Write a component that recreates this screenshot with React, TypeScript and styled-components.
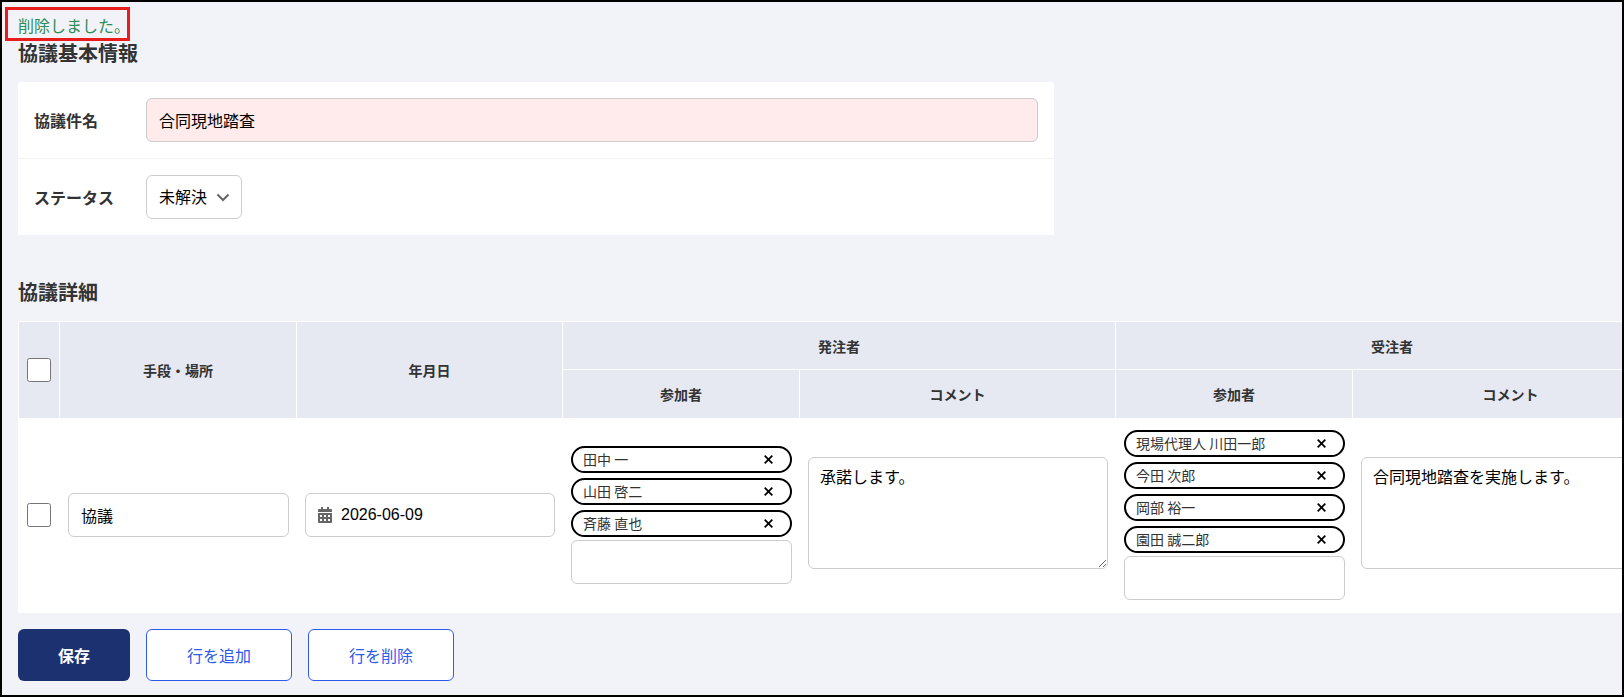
import React from "react";
import styled, { createGlobalStyle } from "styled-components";

const jp = `"Noto Sans CJK JP", sans-serif`;

const GlobalStyle = createGlobalStyle`
  *, *::before, *::after { box-sizing: border-box; }
  body {
    margin: 0;
    background: #f2f3f8;
    color: #333;
    font: 400 16px/24px ${jp};
  }
`;

const Page = styled.main`
  min-height: 100vh;
  padding: 11px 0 14px 16px;
  border: 2px solid #000;
  overflow: hidden;
`;

const Message = styled.p`
  position: relative;
  width: fit-content;
  margin: 0;
  color: #2e8b57;
`;

const Highlight = styled.span`
  position: absolute;
  inset: -6px 0 -4px -13px;
  border: 3px solid #e81c1c;
`;

const Heading = styled.h2`
  margin: 0 0 13px;
  font-size: 20px;
  line-height: 32px;
  font-weight: 700;
`;

const Panel = styled.div`
  max-width: 1036px;
  margin-bottom: 41px;
  background: #fff;
`;

const Field = styled.div`
  display: grid;
  grid-template-columns: 112px 1fr;
  align-items: center;
  padding: 16px;

  & + & { border-top: 1px solid #f2f3f8; }
`;

const FieldLabel = styled.label`
  font-weight: 700;
`;

const TextInput = styled.input<{ $required?: boolean }>`
  display: block;
  width: 100%;
  height: 44px;
  padding: 0 12px;
  border: 1px solid #ccc;
  border-radius: 6px;
  background: ${(p) => (p.$required ? "#ffebeb" : "#fff")};
  color: #000;
  font: 400 16px/24px ${jp};
`;

const SelectBox = styled.div`
  display: grid;
  width: 96px;
  align-items: center;

  & > * { grid-area: 1 / 1; }
  & > svg { justify-self: end; margin-right: 12px; pointer-events: none; }
`;

const Select = styled.select`
  width: 100%;
  height: 44px;
  padding: 0 12px 2px;
  appearance: none;
  border: 1px solid #ccc;
  border-radius: 6px;
  background: #fff;
  color: #000;
  font: 400 16px/24px ${jp};
`;

const TableArea = styled.div`
  overflow: hidden;
  margin-bottom: 16px;
`;

const Table = styled.table`
  width: 1650px;
  table-layout: fixed;
  border-collapse: separate;
  border-spacing: 0;
  background: #fff;
`;

const HeadRow = styled.tr<{ $height: number }>`
  height: ${(p) => p.$height}px;
`;

const HeadCell = styled.th`
  padding: 0 8px;
  border: solid #fff;
  border-width: 1px 0 0 1px;
  background: #e6e8f2;
  font-size: 14px;
  line-height: 20px;
  font-weight: 700;
`;

const Cell = styled.td`
  padding: 11px 7px 13px 8px;
  border: solid #fff;
  border-width: 1px 0 0 1px;
  vertical-align: middle;
`;

const Checkbox = styled.input`
  display: block;
  width: 24px;
  height: 24px;
  margin: 0;
`;

const DateBox = styled.label`
  display: flex;
  align-items: center;
  gap: 9px;
  height: 44px;
  padding: 0 12px;
  border: 1px solid #ccc;
  border-radius: 6px;
  color: #666;
`;

const DateInput = styled.input`
  flex: 1;
  min-width: 0;
  padding: 0;
  border: 0;
  background: none;
  color: #000;
  font: 400 16px/24px "Liberation Sans", Arial, sans-serif;
`;

const People = styled.div`
  display: flex;
  flex-direction: column;
  gap: 3px;
`;

const ChipList = styled.ul`
  display: flex;
  flex-direction: column;
  gap: 5px;
  margin: 0;
  padding: 0;
  list-style: none;
`;

const Chip = styled.li`
  display: flex;
  align-items: center;
  justify-content: space-between;
  height: 27px;
  padding: 0 17px 0 10px;
  border: 2px solid #000;
  border-radius: 14px;
  font-size: 14px;
  line-height: 20px;
`;

const ChipName = styled.span`
  padding-bottom: 2px;
`;

const RemoveButton = styled.button`
  display: flex;
  padding: 0;
  border: 0;
  background: none;
  color: #000;
`;

const Comment = styled.textarea`
  display: block;
  width: 100%;
  height: 112px;
  margin-bottom: 5px;
  padding: 6px 11px;
  border: 1px solid #ccc;
  border-radius: 6px;
  background: #fff;
  color: #000;
  font: 400 16px/24px ${jp};
`;

const Actions = styled.div`
  display: flex;
  gap: 16px;
`;

const Button = styled.button<{ $primary?: boolean }>`
  height: 52px;
  padding: 0 40px;
  border: ${(p) => (p.$primary ? "0" : "1px solid #2f5bea")};
  border-radius: 6px;
  background: ${(p) => (p.$primary ? "#1c3170" : "#fff")};
  color: ${(p) => (p.$primary ? "#fff" : "#2f5bea")};
  font: ${(p) => (p.$primary ? 700 : 400)} 16px/24px ${jp};
`;

const Chevron = () => (
  <svg width="14" height="14" viewBox="0 0 14 14" fill="none" stroke="#666" strokeWidth="2" aria-hidden="true">
    <path d="M1.5 4.5 7 10l5.5-5.5" />
  </svg>
);

const Cross = () => (
  <svg width="9" height="9" viewBox="0 0 9 9" stroke="#000" strokeWidth="1.8" aria-hidden="true">
    <path d="M.7.7l7.6 7.6M8.3.7.7 8.3" />
  </svg>
);

const Calendar = () => (
  <svg width="14" height="16" viewBox="0 0 14 16" fill="#666" aria-hidden="true">
    <path d="M3 0h2v2h4V0h2v2h2a1 1 0 0 1 1 1v2H0V3a1 1 0 0 1 1-1h2z" />
    <path
      fillRule="evenodd"
      d="M0 6h14v9a1 1 0 0 1-1 1H1a1 1 0 0 1-1-1zM2 8v2h2V8zM6 8v2h2V8zM10 8v2h2V8zM2 12v2h2v-2zM6 12v2h2v-2zM10 12v2h2v-2z"
    />
  </svg>
);

const columnWidths = [41, 237, 266, 237, 316, 237, 316];

const parties = [
  { role: "発注者", people: ["田中 一", "山田 啓二", "斉藤 直也"], comment: "承諾します。" },
  {
    role: "受注者",
    people: ["現場代理人 川田一郎", "今田 次郎", "岡部 裕一", "園田 誠二郎"],
    comment: "合同現地踏査を実施します。",
  },
];

export default function App() {
  return (
    <Page>
      <GlobalStyle />
      <Message role="status">
        削除しました。
        <Highlight />
      </Message>
      <Heading>協議基本情報</Heading>
      <Panel>
        <Field>
          <FieldLabel htmlFor="subject">協議件名</FieldLabel>
          <TextInput id="subject" $required defaultValue="合同現地踏査" />
        </Field>
        <Field>
          <FieldLabel htmlFor="status">ステータス</FieldLabel>
          <SelectBox>
            <Select id="status">
              <option>未解決</option>
            </Select>
            <Chevron />
          </SelectBox>
        </Field>
      </Panel>
      <Heading>協議詳細</Heading>
      <TableArea>
        <Table>
          <colgroup>
            {columnWidths.map((w, i) => (
              <col key={i} width={w} />
            ))}
          </colgroup>
          <thead>
            <HeadRow $height={48}>
              <HeadCell rowSpan={2}>
                <Checkbox type="checkbox" aria-label="すべて選択" />
              </HeadCell>
              <HeadCell rowSpan={2}>手段・場所</HeadCell>
              <HeadCell rowSpan={2}>年月日</HeadCell>
              {parties.map((p) => (
                <HeadCell key={p.role} colSpan={2}>{p.role}</HeadCell>
              ))}
            </HeadRow>
            <HeadRow $height={49}>
              {parties.map((p) => (
                <React.Fragment key={p.role}>
                  <HeadCell>参加者</HeadCell>
                  <HeadCell>コメント</HeadCell>
                </React.Fragment>
              ))}
            </HeadRow>
          </thead>
          <tbody>
            <tr>
              <Cell>
                <Checkbox type="checkbox" aria-label="行を選択" />
              </Cell>
              <Cell>
                <TextInput aria-label="手段・場所" defaultValue="協議" />
              </Cell>
              <Cell>
                <DateBox>
                  <Calendar />
                  <DateInput aria-label="年月日" defaultValue="2026-06-09" />
                </DateBox>
              </Cell>
              {parties.map((p) => (
                <React.Fragment key={p.role}>
                  <Cell>
                    <People>
                      <ChipList>
                        {p.people.map((name) => (
                          <Chip key={name}>
                            <ChipName>{name}</ChipName>
                            <RemoveButton type="button" aria-label={`${name}を外す`}>
                              <Cross />
                            </RemoveButton>
                          </Chip>
                        ))}
                      </ChipList>
                      <TextInput aria-label={`${p.role} 参加者`} />
                    </People>
                  </Cell>
                  <Cell>
                    <Comment aria-label={`${p.role} コメント`} defaultValue={p.comment} />
                  </Cell>
                </React.Fragment>
              ))}
            </tr>
          </tbody>
        </Table>
      </TableArea>
      <Actions>
        <Button type="button" $primary>保存</Button>
        <Button type="button">行を追加</Button>
        <Button type="button">行を削除</Button>
      </Actions>
    </Page>
  );
}
